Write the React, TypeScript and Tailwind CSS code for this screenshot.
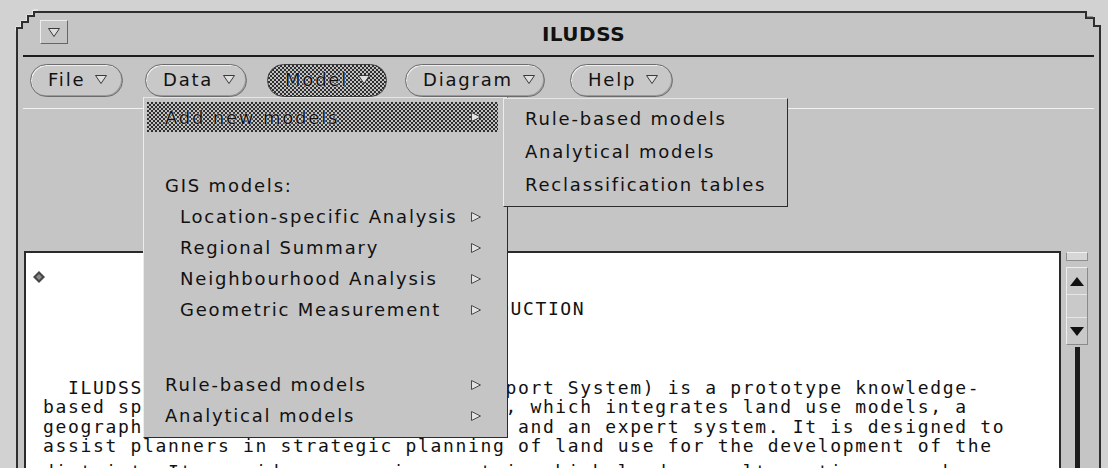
import React from 'react';

const ui = "font-['DejaVu_Sans',sans-serif] text-[18px] tracking-[1.8px] text-[#111]";
const mono = "font-['DejaVu_Sans_Mono',monospace] text-[18px] tracking-[1.66px] text-[#111] whitespace-pre";
const dots =
  'bg-[#c0c0c0] bg-[radial-gradient(circle_at_1px_1px,#2e2e2e_0.9px,transparent_1.3px),radial-gradient(circle_at_3px_3px,#2e2e2e_0.9px,transparent_1.3px)] bg-[length:4px_4px]';
const halo = '[text-shadow:0_0_2px_#e8e8e8,0_0_1px_#e8e8e8]';

function DownTri() {
  return (
    <svg width="12" height="9" viewBox="0 0 12 9">
      <polygon points="0.5,0.5 11.5,0.5 6,8.5" fill="#dedede" stroke="#3a3a3a" />
    </svg>
  );
}

function MenuArrow() {
  return (
    <svg width="10" height="10" viewBox="0 0 10 10">
      <polygon points="0.5,0.5 9.5,5 0.5,9.5" fill="#e2e2e2" stroke="#4a4a4a" />
    </svg>
  );
}

function MenuButton({ label, w, ml, active }: { label: string; w: number; ml: number; active?: boolean }) {
  return (
    <div
      style={{ width: w, marginLeft: ml }}
      className={`h-[33px] rounded-full flex items-center gap-[10px] pl-[17px] pb-[2px] ${ui} ${
        active
          ? `${dots} ${halo} border border-[#3c3c3c]`
          : 'bg-[#c8c8c8] border border-[#6c6c6c] shadow-[inset_1px_1px_0_#efefef,inset_-1px_-1px_0_#9a9a9a]'
      }`}
    >
      <span>{label}</span>
      <DownTri />
    </div>
  );
}

function Row({ label, indent, arrow, hot, h = 31 }: { label: string; indent?: boolean; arrow?: boolean; hot?: boolean; h?: number }) {
  return (
    <div
      style={{ height: h }}
      className={`ml-[3px] mr-[9px] flex items-center justify-between pr-[17px] ${indent ? 'pl-[33px]' : 'pl-[18px]'} ${
        hot ? dots : ''
      }`}
    >
      <span className={`${ui} ${hot ? halo : ''}`}>{label}</span>
      {arrow && <MenuArrow />}
    </div>
  );
}

const para = [
  '  ILUDSS (Interactive LU Decision Support System) is a prototype knowledge-',
  'based spatial decision support system, which integrates land use models, a',
  'geographical information system (GIS) and an expert system. It is designed to',
  'assist planners in strategic planning of land use for the development of the',
];

export default function App() {
  return (
    <div className="relative w-[1108px] h-[468px] overflow-hidden bg-[#d2d2d2] pt-[11px] pl-[16px] pr-[7px]">
      <div className="h-full flex flex-col border-t-2 border-x-2 border-[#2e2e2e] bg-[#c5c5c5]">
        {/* title bar */}
        <div className="h-[42px] flex shrink-0">
          <div className="ml-[22px] mt-[7px] w-[28px] h-[24px] flex items-center justify-center border border-t-[#ececec] border-l-[#ececec] border-r-[#666] border-b-[#666]">
            <DownTri />
          </div>
          <div className="flex-1 text-center leading-[42px] font-['DejaVu_Sans',sans-serif] font-bold text-[20px] tracking-[0.5px] text-[#111]">
            ILUDSS
          </div>
        </div>
        <div className="mx-[5px] h-[2px] bg-[#1e1e1e] shrink-0" />

        {/* menu bar */}
        <div className="mt-[7px] flex pl-[12px] shrink-0">
          <MenuButton label="File" w={93} ml={0} />
          <MenuButton label="Data" w={102} ml={22} />
          <MenuButton label="Model" w={120} ml={20} active />
          <MenuButton label="Diagram" w={140} ml={18} />
          <MenuButton label="Help" w={103} ml={25} />
        </div>
        <div className="mt-[11px] mx-[5px] h-px bg-[#f2f2f2] shrink-0" />
        <div className="h-[142px] shrink-0" />

        {/* text pane + scrollbar */}
        <div className="flex flex-1 min-h-0 pl-[6px]">
          <div className="flex-1 bg-white border-t-2 border-x-2 border-[#2a2a2a] pt-[18px] pl-[7px] overflow-hidden">
            <svg width="12" height="12" viewBox="0 0 12 12">
              <polygon points="6,0 12,6 6,12 0,6" fill="#474747" />
              <polygon points="6,3 9,6 6,9 3,6" fill="#8a8a8a" />
            </svg>
            <div className="ml-[10px]">
              <div className={`mt-[16px] ml-[5px] leading-[20px] ${mono}`}>{' '.repeat(31) + 'INTRODUCTION'}</div>
              <div className={`mt-[59px] leading-[19.3px] ${mono}`}>{para.join('\n')}</div>
              <div className={`mt-[7px] leading-[19.3px] ${mono}`}>
                district. It provides an environment in which land use alternatives can be
              </div>
            </div>
          </div>
          <div className="w-[22px] ml-[5px] mr-[11px] flex flex-col items-center">
            <div className="mt-px w-full h-[9px] bg-[#d6d6d6] border border-[#8e8e8e] border-t-[#f0f0f0]" />
            <div className="mt-[6px] w-full border border-[#8a8a8a] border-t-[#eeeeee] border-l-[#eeeeee] bg-[#c9c9c9] flex flex-col">
              <div className="h-[26px] flex items-center justify-center">
                <svg width="14" height="9" viewBox="0 0 14 9">
                  <polygon points="7,0 14,9 0,9" fill="#111" />
                </svg>
              </div>
              <div className="h-[24px] border-y border-[#e6e6e6]" />
              <div className="h-[26px] flex items-center justify-center">
                <svg width="14" height="9" viewBox="0 0 14 9">
                  <polygon points="0,0 14,0 7,9" fill="#111" />
                </svg>
              </div>
            </div>
            <div className="mt-[2px] w-[5px] flex-1 bg-[#1c1c1c]" />
          </div>
        </div>
      </div>

      {/* frame corners */}
      <svg className="absolute left-0 top-0" width="40" height="36" viewBox="0 0 40 36">
        <polygon points="14,8 38,8 38,11 34,11 34,16 28,16 28,22 22,22 22,28 18,28 18,31 14,31" fill="#d2d2d2" />
        <path d="M16 31 V27 H21 V21 H27 V15 H33 V10 H38" fill="none" stroke="#f6f6f6" strokeWidth="1" />
        <path d="M17 32 V28 H22 V22 H28 V16 H34 V12 H38" fill="none" stroke="#2e2e2e" strokeWidth="2" />
      </svg>
      <svg className="absolute left-[1080px] top-0" width="28" height="36" viewBox="0 0 28 36">
        <polygon points="5,8 24,8 24,31 21,31 21,26 14,26 14,18 5,18" fill="#d2d2d2" />
        <path d="M4 12 H6 V18 H14 V26 H20 V32" fill="none" stroke="#2e2e2e" strokeWidth="2" />
        <path d="M7 17 H13" stroke="#555" strokeWidth="1" />
      </svg>

      {/* Model menu */}
      <div className="absolute left-[143px] top-[97px] w-[365px] h-[341px] bg-[#c5c5c5] border border-t-[#e6e6e6] border-l-[#ececec] border-r-[#2c2c2c] border-b-[#2c2c2c]">
        <div className="mt-[4px]">
          <Row label="Add new models" arrow hot h={30} />
        </div>
        <div className="mt-[38px]">
          <Row label="GIS models:" />
          <Row label="Location-specific Analysis" indent arrow />
          <Row label="Regional Summary" indent arrow />
          <Row label="Neighbourhood Analysis" indent arrow />
          <Row label="Geometric Measurement" indent arrow />
        </div>
        <div className="mt-[44px]">
          <Row label="Rule-based models" arrow />
          <Row label="Analytical models" arrow />
        </div>
      </div>

      {/* Add new models submenu */}
      <div className="absolute left-[503px] top-[98px] w-[285px] h-[109px] bg-[#c5c5c5] border border-t-[#e6e6e6] border-l-[#ececec] border-r-[#2c2c2c] border-b-[#2c2c2c] pt-[3px] pl-[21px]">
        {['Rule-based models', 'Analytical models', 'Reclassification tables'].map((t) => (
          <div key={t} className={`h-[33px] flex items-center ${ui}`}>
            {t}
          </div>
        ))}
      </div>
    </div>
  );
}
